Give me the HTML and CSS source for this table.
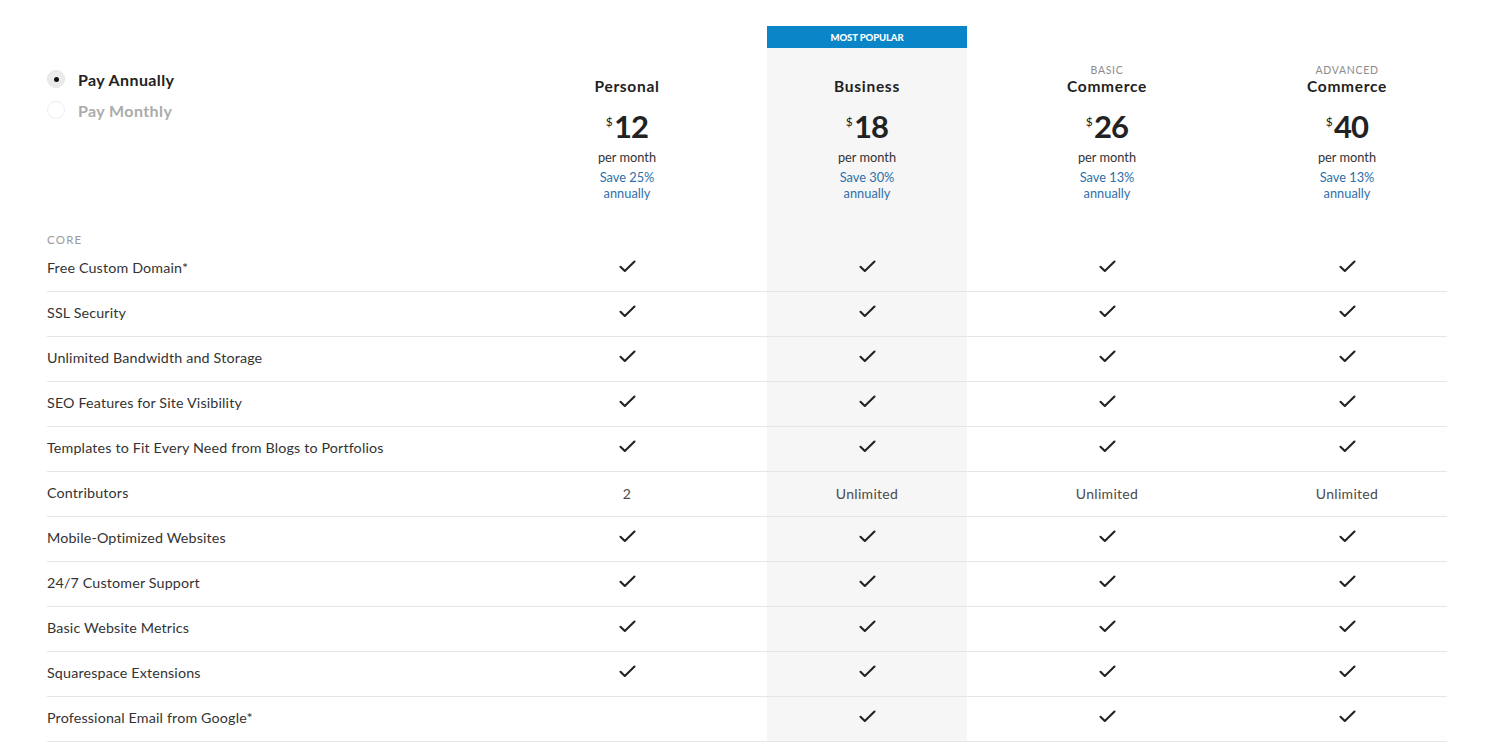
FILE: index.html
```html
<!DOCTYPE html>
<html lang="en">
<head>
<meta charset="utf-8">
<title>Pricing</title>
<link rel="stylesheet" href="styles.css">
</head>
<body>
<div class="pricing">
  <div class="head grid">
    <div class="billing">
      <div class="radio-row active"><span class="radio"><span class="dot"></span></span><span>Pay Annually</span></div>
      <div class="radio-row"><span class="radio"></span><span>Pay Monthly</span></div>
    </div>
    <div class="plan">
      <div class="plan-body">
        <div class="tier"></div>
        <div class="name">Personal</div>
        <div class="price"><sup>$</sup>12</div>
        <div class="per">per month</div>
        <div class="save">Save 25%<br>annually</div>
      </div>
    </div>
    <div class="plan popular">
      <div class="banner">MOST POPULAR</div>
      <div class="plan-body">
        <div class="tier"></div>
        <div class="name">Business</div>
        <div class="price"><sup>$</sup>18</div>
        <div class="per">per month</div>
        <div class="save">Save 30%<br>annually</div>
      </div>
    </div>
    <div class="plan">
      <div class="plan-body">
        <div class="tier">BASIC</div>
        <div class="name">Commerce</div>
        <div class="price"><sup>$</sup>26</div>
        <div class="per">per month</div>
        <div class="save">Save 13%<br>annually</div>
      </div>
    </div>
    <div class="plan">
      <div class="plan-body">
        <div class="tier">ADVANCED</div>
        <div class="name">Commerce</div>
        <div class="price"><sup>$</sup>40</div>
        <div class="per">per month</div>
        <div class="save">Save 13%<br>annually</div>
      </div>
    </div>
  </div>

  <div class="section grid">
    <div class="section-label">CORE</div>
    <div></div><div class="hl"></div><div></div><div></div>
  </div>

  <div class="rows" id="rows"></div>
</div>
<script src="script.js"></script>
</body>
</html>
```

FILE: script.js
```js
const C = 'check';
const rows = [
  ['Free Custom Domain*', C, C, C, C],
  ['SSL Security', C, C, C, C],
  ['Unlimited Bandwidth and Storage', C, C, C, C],
  ['SEO Features for Site Visibility', C, C, C, C],
  ['Templates to Fit Every Need from Blogs to Portfolios', C, C, C, C],
  ['Contributors', '2', 'Unlimited', 'Unlimited', 'Unlimited'],
  ['Mobile-Optimized Websites', C, C, C, C],
  ['24/7 Customer Support', C, C, C, C],
  ['Basic Website Metrics', C, C, C, C],
  ['Squarespace Extensions', C, C, C, C],
  ['Professional Email from Google*', '', C, C, C]
];
const check = '<svg class="check" width="17" height="13" viewBox="0 0 17 13"><path d="M1.5 6.8 L5.8 11 L15.5 1.5" fill="none" stroke="#222" stroke-width="2.1" stroke-linecap="round" stroke-linejoin="round"/></svg>';
const host = document.getElementById('rows');
host.innerHTML = rows.map(r => {
  const cells = r.slice(1).map((v, i) => {
    const inner = v === C ? check : (v ? '<span class="val">' + v + '</span>' : '');
    return '<div class="cell' + (i === 1 ? ' hl' : '') + '">' + inner + '</div>';
  }).join('');
  return '<div class="row grid"><div class="label">' + r[0] + '</div>' + cells + '</div>';
}).join('');
```

FILE: styles.css
```css
html, body {
  margin: 0;
  padding: 0;
  background: #fff;
}
body {
  font-family: Lato, "Liberation Sans", sans-serif;
  color: #222;
  overflow: hidden;
}
.pricing {
  width: 1400px;
  margin-left: 47px;
  padding-top: 26px;
}
.grid {
  display: grid;
  grid-template-columns: 440px repeat(4, 200px);
  column-gap: 40px;
}
.head {
  align-items: stretch;
}
.billing {
  padding-top: 42px;
  display: flex;
  flex-direction: column;
  gap: 9px;
}
.radio-row {
  display: flex;
  align-items: center;
  height: 22px;
  font-size: 16px;
  font-weight: 700;
  color: #ababab;
  letter-spacing: 0.4px;
}
.radio-row.active {
  color: #222;
}
.radio {
  width: 18px;
  height: 18px;
  border-radius: 50%;
  border: 1px solid #eeeeee;
  box-sizing: border-box;
  margin-right: 13px;
  display: flex;
  align-items: center;
  justify-content: center;
}
.active .radio {
  background: #ebebeb;
  border-color: #e4e4e4;
}
.dot {
  width: 5px;
  height: 5px;
  border-radius: 50%;
  background: #111;
}
.plan {
  display: flex;
  flex-direction: column;
  padding-top: 22px;
}
.plan.popular {
  padding-top: 0;
}
.banner {
  height: 22px;
  background: #0a85c8;
  color: #fff;
  font-size: 9.5px;
  font-weight: 900;
  letter-spacing: -0.1px;
  display: flex;
  align-items: center;
  justify-content: center;
}
.plan-body {
  flex: 1;
  text-align: center;
  padding-top: 15px;
  padding-bottom: 14px;
}
.popular .plan-body,
.hl {
  background: #f6f6f6;
}
.tier {
  height: 14px;
  line-height: 14px;
  font-size: 10.5px;
  color: #8c8c8c;
  letter-spacing: 0.7px;
}
.name {
  height: 18px;
  line-height: 18px;
  font-size: 15.5px;
  font-weight: 700;
  color: #222;
  letter-spacing: 0.7px;
}
.price {
  margin-top: 11px;
  height: 40px;
  line-height: 40px;
  font-size: 31px;
  font-weight: 700;
  color: #222;
  letter-spacing: -0.8px;
}
.price sup {
  font-size: 12px;
  font-weight: 400;
  vertical-align: top;
  position: relative;
  top: -4px;
  margin-right: 2px;
}
.per {
  margin-top: 3px;
  line-height: 16px;
  font-size: 12.8px;
  color: #333;
}
.save {
  margin-top: 4px;
  line-height: 16px;
  font-size: 12.8px;
  color: #2d6fa9;
}
.section {
  height: 32px;
}
.section-label {
  align-self: end;
  height: 14px;
  line-height: 14px;
  font-size: 11.5px;
  color: #9a9a9a;
  letter-spacing: 1.2px;
}
.row {
  box-sizing: border-box;
  height: 45px;
  border-bottom: 1px solid #e6e6e6;
}
.label {
  display: flex;
  align-items: center;
  font-size: 14.3px;
  color: #333;
  letter-spacing: 0.15px;
  padding-bottom: 3px;
}
.cell {
  display: flex;
  align-items: center;
  justify-content: center;
}
.val {
  font-size: 14px;
  color: #4a4a4a;
  letter-spacing: 0.3px;
  margin-top: -2px;
}
.check {
  display: block;
  margin-top: -6px;
}
```
